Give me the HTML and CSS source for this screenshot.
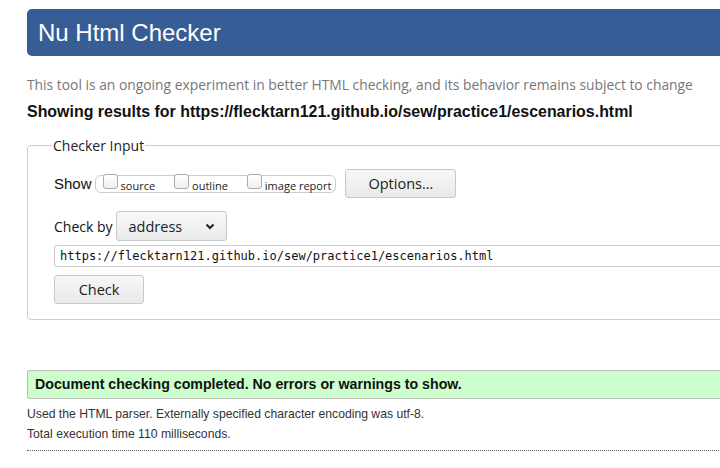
FILE: index.html
```html
<!DOCTYPE html>
<html>
<head>
<meta charset="utf-8">
<link rel="stylesheet" href="styles.css">
</head>
<body>
<div class="page">
  <h1 class="banner">Nu Html Checker</h1>
  <p class="subtitle">This tool is an ongoing experiment in better HTML checking, and its behavior remains subject to change</p>
  <p class="results">Showing results for https://flecktarn121.github.io/sew/practice1/escenarios.html</p>
  <fieldset class="input-box">
    <legend class="legend">Checker Input</legend>
    <div class="row show-row">
      <span class="lbl">Show</span>
      <span class="group">
        <span class="opt"><span class="cb"></span><span class="opt-text">source</span></span>
        <span class="opt"><span class="cb"></span><span class="opt-text">outline</span></span>
        <span class="opt"><span class="cb"></span><span class="opt-text">image report</span></span>
      </span>
      <span class="btn options">Options…</span>
    </div>
    <div class="row by-row">
      <span class="lbl lbl-by">Check by</span>
      <span class="select">address
        <svg class="chev" width="10" height="7" viewBox="0 0 10 7"><path d="M1.5 1.5 L5 5 L8.5 1.5" fill="none" stroke="#222" stroke-width="2"/></svg>
      </span>
    </div>
    <div class="url">https://flecktarn121.github.io/sew/practice1/escenarios.html</div>
    <div class="btn check">Check</div>
  </fieldset>
  <div class="success">Document checking completed. No errors or warnings to show.</div>
  <p class="info">Used the HTML parser. Externally specified character encoding was utf-8.</p>
  <p class="info">Total execution time 110 milliseconds.</p>
  <hr class="dots">
</div>
</body>
</html>
```
FILE: styles.css
```css
html, body { overflow: hidden; }
body {
  margin: 0;
  background: #fff;
  font-family: "Liberation Sans", Arial, sans-serif;
  color: #111;
}
.page {
  width: 760px;
  padding: 9px 0 0 27px;
}
.banner {
  margin: 0;
  height: 47px;
  box-sizing: border-box;
  background: #365d95;
  color: #fff;
  border-radius: 5px 0 0 5px;
  font-weight: normal;
  font-size: 24px;
  line-height: 47px;
  padding-left: 11px;
}
.subtitle {
  margin: 20px 0 0;
  font-family: "Open Sans", sans-serif;
  font-size: 13.85px;
  color: #777;
  line-height: 18px;
}
.results {
  margin: 8px 0 0;
  font-weight: bold;
  font-size: 15.95px;
  line-height: 20px;
}
.input-box {
  margin: 14px 0 0;
  border: 1px solid #ccc;
  border-radius: 4px;
  padding: 14px 0 15px 26px;
  min-width: 0;
}
.legend {
  font-family: "Open Sans", sans-serif;
  font-size: 14px;
  color: #222;
  padding: 0 1px;
  margin-left: -2px;
}
.row {
  display: flex;
  align-items: center;
}
.lbl {
  font-size: 15px;
  color: #111;
}
.lbl-by {
  font-family: "Open Sans", sans-serif;
  font-size: 14px;
  margin-right: 3px;
}
.group {
  display: inline-flex;
  align-items: center;
  margin-left: 3px;
  height: 18px;
  box-sizing: border-box;
  border: 1px solid #ccc;
  border-radius: 6px;
  padding: 0 4px 0 7px;
  gap: 19px;
}
.opt {
  display: inline-flex;
  align-items: center;
  margin-top: -4px;
}
.cb {
  width: 15px;
  height: 15px;
  box-sizing: border-box;
  border: 1px solid #aaa;
  border-radius: 3px;
  background: linear-gradient(#fff, #eee);
}
.opt-text {
  font-family: "Open Sans", sans-serif;
  font-size: 11px;
  color: #222;
  margin: 7px 0 0 3px;
}
.btn {
  display: inline-flex;
  align-items: center;
  justify-content: center;
  box-sizing: border-box;
  border: 1px solid #c8c8c8;
  border-radius: 3px;
  background: linear-gradient(#f7f7f7, #e9e9e9);
  font-family: "Open Sans", sans-serif;
  font-size: 14.5px;
  color: #222;
}
.options {
  width: 111px;
  height: 29px;
  margin-left: 9px;
}
.by-row {
  margin-top: 13px;
}
.select {
  display: inline-flex;
  align-items: center;
  box-sizing: border-box;
  width: 111px;
  height: 30px;
  border: 1px solid #c8c8c8;
  border-radius: 3px;
  background: linear-gradient(#f7f7f7, #ebebeb);
  font-family: "Open Sans", sans-serif;
  font-size: 14.5px;
  color: #222;
  padding-left: 12px;
}
.chev { margin-left: 23px; }
.url {
  margin-top: 4px;
  height: 22px;
  box-sizing: border-box;
  border: 1px solid #ccc;
  border-right: none;
  border-radius: 3px 0 0 3px;
  font-family: "DejaVu Sans Mono", monospace;
  font-size: 12px;
  line-height: 20px;
  padding-left: 5px;
  color: #111;
}
.check {
  margin-top: 8px;
  width: 90px;
  height: 29px;
}
.success {
  margin-top: 50px;
  height: 29px;
  box-sizing: border-box;
  background: #ccffcc;
  border: 1px solid #bbb;
  border-right: none;
  border-radius: 3px 0 0 3px;
  font-weight: bold;
  font-size: 14.2px;
  line-height: 27px;
  padding-left: 7px;
  color: #111;
}
.info {
  margin: 7px 0 0;
  font-size: 12.2px;
  line-height: 16px;
  color: #333;
}
.info + .info { margin-top: 4px; }
.dots {
  margin: 8px 0 0;
  border: none;
  border-top: 1px dotted #666;
  height: 0;
}
```
